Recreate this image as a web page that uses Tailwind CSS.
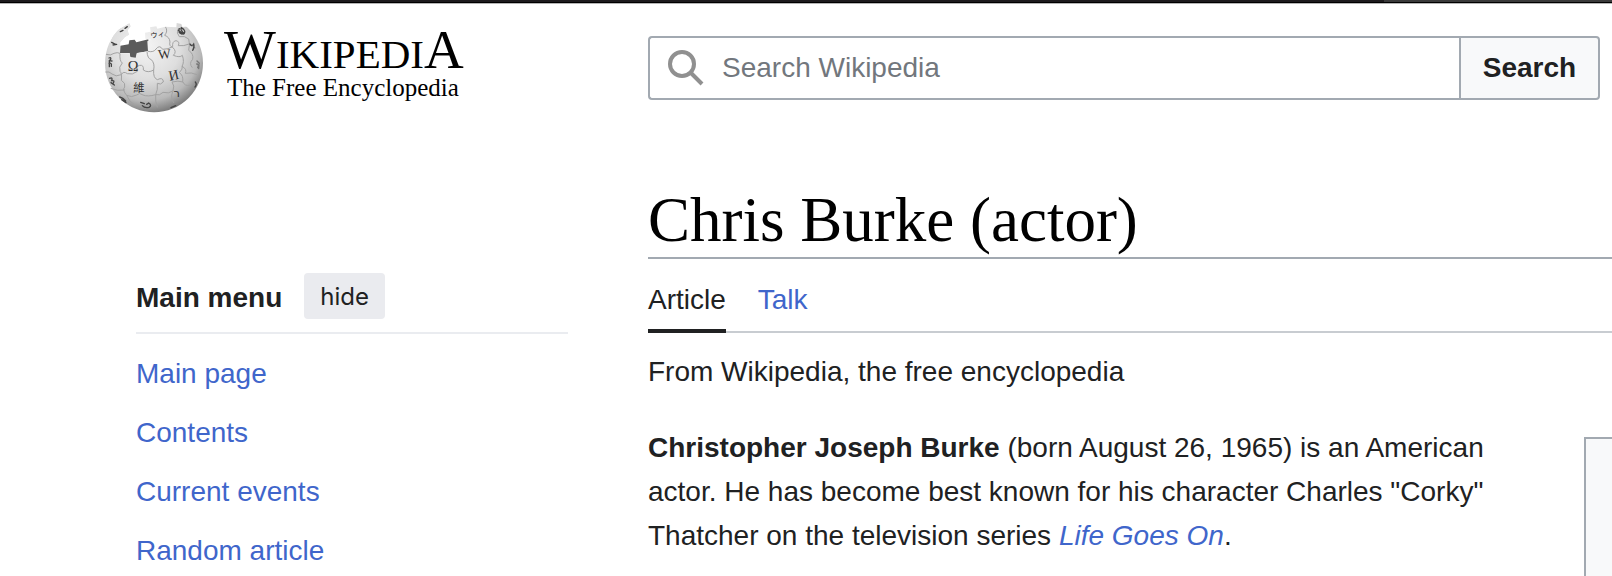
<!DOCTYPE html>
<html lang="en">
<head>
<meta charset="utf-8">
<title>Chris Burke (actor) - Wikipedia</title>
<script src="https://cdn.jsdelivr.net/npm/@tailwindcss/browser@4"></script>
</head>
<body class="bg-white font-['Liberation_Sans',Arial,sans-serif] text-[28px] leading-[44px] text-[#202122]">
<div class="h-screen overflow-hidden">
<div class="flex h-1 border-b border-[#b5b5b5]">
  <div class="flex-1 border-b border-black bg-[#1d1b1d]"></div>
  <div class="w-[228px] border-b border-black bg-[#3a3a3a]"></div>
</div>

<header class="flex pr-3 pl-[104px]">
  <a href="#" class="mt-[17px] flex w-[544px] shrink-0 text-black" aria-label="Wikipedia, The Free Encyclopedia">
    <svg class="h-[92px] w-[100px] shrink-0" viewBox="42 63 300 276" aria-hidden="true">
      <defs>
        <radialGradient id="globe" cx="0.42" cy="0.32" r="0.7">
          <stop offset="0" stop-color="#f4f4f4"/><stop offset="0.5" stop-color="#dedede"/><stop offset="0.8" stop-color="#b9b9b9"/><stop offset="1" stop-color="#777"/>
        </radialGradient>
        <clipPath id="ball"><path d="M118 70 L122 79 L113 91 L117 104 L105 111 L91 127 L90 160 L119 160 L121 171 L137 173 L140 160 L174 154 L172 124 L184 119 L166 116 L165 98 L182 95 L180 82 L199 79 L202 86 L226 80 L259 82 L260 69 L274 72 L277 81 L303 79 L345 79 L345 340 L40 340 L40 110 L72 96 L87 88 L104 78 Z"/></clipPath>
      </defs>
      <path d="M91 137 L116 133 L118 121 L134 119 L139 127 L175 118 L178 153 L141 159 L139 174 L121 173 L119 159 L90 159 Z" fill="#5b5b5b"/>
      <g clip-path="url(#ball)">
        <path d="M70 108 L87 88 L104 78 L118 70 L122 79 L113 91 L117 104 L105 111 L88 130 L58 132 Z" fill="#d2d2d2"/>
        <circle cx="192" cy="190" r="147" fill="url(#globe)"/>
        <g fill="none" stroke="#a2a2a2" stroke-width="3">
          <path d="M48 163 Q62 168 72 160 Q82 156 90 160 M90 160 Q88 183 97 189 Q85 201 90 214 Q96 219 94 241 M46 216 Q58 213 66 222 Q77 232 94 224 Q100 212 112 221 Q127 226 142 214 Q136 199 149 196 Q162 194 160 210 Q174 220 191 210 Q195 190 184 179 Q172 176 171 154"/>
          <path d="M174 154 Q191 158 198 147 Q209 133 218 148 Q235 148 248 140 Q246 124 258 122 Q270 124 265 137 Q282 139 297 132 Q307 141 317 144"/>
          <path d="M226 80 Q235 93 224 106 Q239 111 240 126 Q236 138 248 142 Q262 155 250 166 Q270 174 277 166 Q284 186 276 199 Q292 207 286 220 Q304 216 321 224"/>
          <path d="M191 210 Q189 234 202 239 Q220 230 220 246 Q212 256 202 250 Q204 270 197 284 Q209 288 219 277 Q236 282 249 273 Q255 257 246 246 Q265 241 279 246 Q284 259 300 256"/>
          <path d="M94 241 Q108 249 104 261 Q96 270 110 286 Q124 294 140 285 Q148 276 159 285 Q173 291 197 284 Q195 305 202 322"/>
          <path d="M62 265 Q82 274 104 270 M110 286 Q117 306 136 316 M248 275 Q240 295 252 309 M278 246 Q281 226 268 218 Q279 207 277 198"/>
          <path d="M265 85 Q258 100 268 110 Q284 106 296 117 Q301 132 296 151 Q312 162 308 178 Q296 190 307 203"/>
        </g>
        <g fill="#303030" font-family="'Liberation Serif','Noto Sans CJK JP',serif" text-anchor="middle">
          <text x="129" y="213" font-size="43">Ω</text>
          <text x="224" y="175" font-size="40" transform="rotate(-5 224 175)">W</text>
          <text x="254" y="239" font-size="42" transform="rotate(-12 254 239)">И</text>
          <text x="147" y="275" font-size="34" font-family="'Noto Sans CJK TC',sans-serif">維</text>
          <text x="204" y="112" font-size="22" transform="rotate(-8 204 112)" font-family="'Noto Sans CJK JP',sans-serif">ウィ</text>
          <text x="260" y="292" font-size="34" font-family="'DejaVu Sans',sans-serif">ר</text>
        </g>
        <g fill="none" stroke="#444" stroke-width="4" stroke-linecap="round">
          <path d="M91 95 L99 91 M105 85 L112 80 M65 127 L74 132 L68 135 L80 133"/>
          <path d="M57 174 Q64 170 62 178 Q56 183 66 183 M57 190 Q66 187 64 199 M58 181 L58 200"/>
          <path d="M59 235 Q69 230 65 242 Q75 240 70 249 M63 248 L73 255"/>
          <path d="M89 291 Q99 293 107 303 M95 299 L108 308"/>
          <path d="M152 307 L163 311 M157 317 Q164 325 177 322 Q187 316 176 309 L170 313"/>
          <path d="M268 86 Q262 98 276 102 Q290 99 281 88 L274 83 Q269 89 283 101 M265 91 L280 102"/>
          <path d="M300 132 Q305 141 311 132 Q314 143 308 151"/>
          <path d="M321 183 L328 190 M320 192 Q328 192 323 203 M327 194 L326 206" stroke="#777"/>
          <path d="M316 246 Q322 253 315 261 M243 323 L257 317"/>
        </g>
      </g>
    </svg>
    <span class="ml-5 flex flex-col font-['Liberation_Serif',serif]">
      <span class="h-[52px] text-[41px] leading-[58px] whitespace-nowrap"><span class="text-[55px]">W</span>IKIPEDI<span class="text-[55px]">A</span></span>
      <span class="ml-[3px] text-[25px] leading-[30px]">The Free Encyclopedia</span>
    </span>
  </a>
  <form class="mt-8 flex h-16 flex-1" role="search" onsubmit="return false">
    <label class="flex min-w-0 flex-1 items-center rounded-l border-2 border-r-0 border-[#a2a9b1] bg-white pl-[18px]">
      <svg class="size-9 shrink-0" viewBox="0 0 36 36" fill="none" stroke="#909090" stroke-width="4" aria-hidden="true"><circle cx="14" cy="14" r="12"/><path d="M22.5 22.5 34 34"/></svg>
      <input type="search" aria-label="Search Wikipedia" placeholder="Search Wikipedia" class="ml-[18px] min-w-0 flex-1 bg-transparent outline-none placeholder:text-[#72777d]">
    </label>
    <button class="w-[141px] rounded-r border-2 border-[#a2a9b1] bg-[#f8f9fa] font-bold">Search</button>
  </form>
</header>

<div class="flex pl-[136px]">
  <nav class="mt-40 mr-20 w-[432px] shrink-0" aria-label="Main menu">
    <div class="flex h-[61px] items-start border-b-2 border-[#eaecf0]">
      <h2 class="leading-[50px] font-bold">Main menu</h2>
      <button class="ml-[22px] h-[46px] rounded bg-[#eaebef] px-4 font-[Inter,sans-serif] text-[24px] leading-[48px]">hide</button>
    </div>
    <ul class="mt-[10px] leading-[59px] text-[#3f66cb]">
      <li><a href="#">Main page</a></li>
      <li><a href="#">Contents</a></li>
      <li><a href="#">Current events</a></li>
      <li><a href="#">Random article</a></li>
    </ul>
  </nav>
  <main class="mt-[72px] min-w-0 flex-1">
    <h1 class="h-[74px] border-b-2 border-[#a2a9b1] font-['Liberation_Serif',serif] text-[63px] leading-[70px] text-black">Chris Burke (actor)</h1>
    <div class="flex h-[74px] gap-8 border-b-2 border-[#c8ccd1] leading-[82px]">
      <a href="#" class="-mb-0.5 border-b-4 border-[#202122]">Article</a>
      <a href="#" class="text-[#3f66cb]">Talk</a>
    </div>
    <p class="mt-[17px]">From Wikipedia, the free encyclopedia</p>
    <div class="mt-8 flex gap-14">
      <p class="flex-1"><b>Christopher Joseph Burke</b> (born August 26, 1965) is an American actor. He has become best known for his character Charles "Corky" Thatcher on the television series <a href="#" class="text-[#3f66cb] italic">Life Goes On</a>.</p>
      <aside class="mt-[11px] h-[200px] w-7 shrink-0 border-t-2 border-l-2 border-[#a2a9b1] bg-[#f8f9fa]"></aside>
    </div>
  </main>
</div>
</div>
</body>
</html>
